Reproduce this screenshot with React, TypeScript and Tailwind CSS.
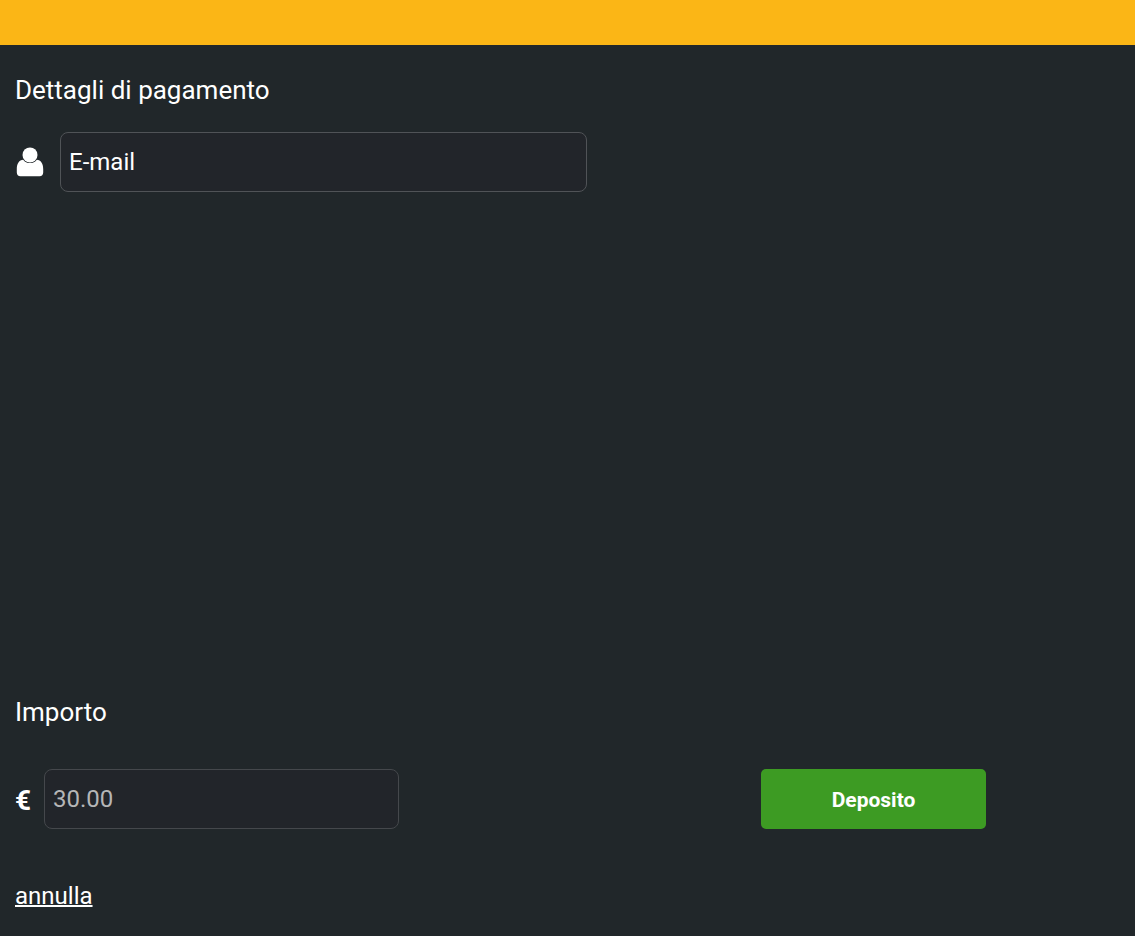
import { useState } from "react";

const UserIcon = () => (
  <svg
    viewBox="0 0 30 30"
    className="size-[30px] shrink-0 fill-white"
    aria-hidden="true"
  >
    <path d="M8.2 12.7C4.2 12.9 1.8 16.6 1.8 22v3.4C1.8 27.7 3.2 29.2 5.4 29.2h19.2c2.2 0 3.6-1.5 3.6-3.8V22c0-5.4-2.4-9.1-6.4-9.3-1.5 2.1-3.9 3.4-6.8 3.4s-5.3-1.3-6.8-3.4Z" />
    <circle cx="15" cy="7.9" r="7.5" />
  </svg>
);

const App = () => {
  const [email, setEmail] = useState("");
  const [amount, setAmount] = useState("30.00");

  return (
    <div className="flex min-h-screen flex-col bg-[#21272a] font-[Roboto,sans-serif] text-white">
      <header className="h-[45px] shrink-0 bg-[#fbb616]" />

      <form
        className="flex flex-1 flex-col px-[15px] pt-[30px] pb-6"
        onSubmit={(e) => e.preventDefault()}
      >
        {/* Payment details */}
        <h1 className="text-[26px] leading-[30px]">Dettagli di pagamento</h1>
        <div className="mt-[27px] flex items-center gap-[15px]">
          <label htmlFor="email">
            <UserIcon />
          </label>
          <input
            id="email"
            type="email"
            aria-label="E-mail"
            placeholder="E-mail"
            value={email}
            onChange={(e) => setEmail(e.target.value)}
            className="h-[60px] w-[527px] rounded-lg border border-[#505357] bg-[#22252a] px-2 text-2xl text-white outline-none placeholder:text-white"
          />
        </div>

        {/* Amount */}
        <h2 className="mt-auto text-[26px] leading-[30px]">Importo</h2>
        <div className="mt-[42px] flex items-center">
          <label
            htmlFor="amount"
            className="w-[29px] pt-1 text-[28px] leading-8 font-bold"
          >
            €
          </label>
          <input
            id="amount"
            type="text"
            inputMode="decimal"
            aria-label="Importo"
            value={amount}
            onChange={(e) => setAmount(e.target.value)}
            className="h-[60px] w-[355px] rounded-lg border border-[#45484c] bg-[#22252a] px-2 text-2xl text-[#b5b6b7] outline-none"
          />
          <button
            type="submit"
            className="mr-[134px] ml-auto h-[60px] w-[225px] cursor-pointer rounded-[5px] bg-[#3d9b23] pt-1 text-[21px] font-bold"
          >
            Deposito
          </button>
        </div>
        <a
          href="#"
          className="mt-[51px] self-start text-2xl underline decoration-2"
        >
          annulla
        </a>
      </form>
    </div>
  );
};

export default App;
